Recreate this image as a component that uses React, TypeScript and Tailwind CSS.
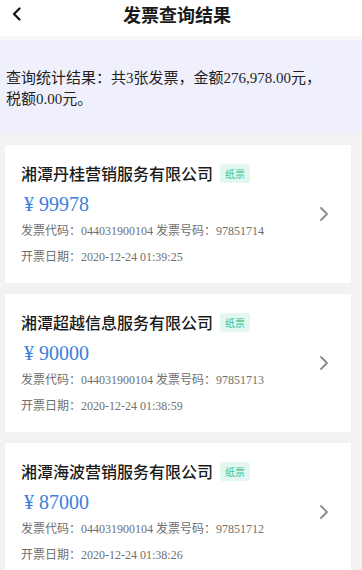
import React from 'react';

interface Invoice {
  company: string;
  amount: string;
  code: string;
  number: string;
  date: string;
}

const invoices: Invoice[] = [
  { company: '湘潭丹桂营销服务有限公司', amount: '99978', code: '044031900104', number: '97851714', date: '2020-12-24 01:39:25' },
  { company: '湘潭超越信息服务有限公司', amount: '90000', code: '044031900104', number: '97851713', date: '2020-12-24 01:38:59' },
  { company: '湘潭海波营销服务有限公司', amount: '87000', code: '044031900104', number: '97851712', date: '2020-12-24 01:38:26' },
];

const mixed = "font-['Liberation_Serif','Noto_Sans_CJK_SC',serif]";

const InvoiceCard: React.FC<{ invoice: Invoice }> = ({ invoice }) => {
  return (
    <div className="ml-[5px] mr-[11px] bg-white flex items-center pl-[16px] pr-[22px] pt-[16px] pb-[17px]">
      <div className="flex-1 min-w-0">
        <div className="flex items-center h-[24px]">
          <span className="text-[16px] leading-[24px] font-medium text-[#1a1a1a] font-['Noto_Sans_CJK_SC',sans-serif] whitespace-nowrap">
            {invoice.company}
          </span>
          <span className="ml-[7px] h-[19px] px-[5px] rounded-[3px] bg-[#e2f8f1] text-[#3fc495] text-[10px] leading-[19px] font-['Noto_Sans_CJK_SC',sans-serif]">
            纸票
          </span>
        </div>
        <div className="mt-[5px] h-[28px] leading-[28px] text-[20px] text-[#3b7fe0] font-['Liberation_Serif',serif] pl-[3px]">
          ¥<span className="pl-[5px]">{invoice.amount}</span>
        </div>
        <div className={`mt-[4px] h-[18px] leading-[18px] text-[12px] text-[#6f6f6f] whitespace-nowrap ${mixed}`}>
          发票代码：{invoice.code} 发票号码：{invoice.number}
        </div>
        <div className={`mt-[8px] h-[18px] leading-[18px] text-[12px] text-[#6f6f6f] whitespace-nowrap ${mixed}`}>
          开票日期：{invoice.date}
        </div>
      </div>
      <svg width="10" height="16" viewBox="0 0 10 16" className="shrink-0">
        <polyline points="2,2 8,8 2,14" fill="none" stroke="#8a8a8a" strokeWidth="1.8" strokeLinecap="round" strokeLinejoin="round" />
      </svg>
    </div>
  );
};

const App: React.FC = () => {
  return (
    <div className="w-[362px] h-[570px] overflow-hidden bg-[#f2f2f2]">
      <div className="bg-white h-[36px]">
        <div className="grid grid-cols-[36px_1fr_44px] h-[28px] items-center">
          <div className="flex items-center pl-[12px]">
            <svg width="10" height="14" viewBox="0 0 10 14">
              <polyline points="7.5,1.5 2,7 7.5,12.5" fill="none" stroke="#111" strokeWidth="2.2" strokeLinecap="round" strokeLinejoin="round" />
            </svg>
          </div>
          <div className="text-center text-[18px] font-bold text-[#1a1a1a] font-['Noto_Sans_CJK_SC',sans-serif] leading-[28px]">
            发票查询结果
          </div>
          <div />
        </div>
      </div>
      <div className="h-[4px] bg-[#f9f9f9]" />
      <div className={`bg-[#eff0fb] pl-[6px] pr-[30px] pt-[28px] pb-[24px] text-[15px] leading-[21px] text-[#1f1f1f] ${mixed}`}>
        查询统计结果：共3张发票，金额276,978.00元，税额0.00元。
      </div>
      <div className="pt-[11px] flex flex-col gap-[11px]">
        {invoices.map((inv, i) => (
          <InvoiceCard key={i} invoice={inv} />
        ))}
      </div>
    </div>
  );
};

export default App;
